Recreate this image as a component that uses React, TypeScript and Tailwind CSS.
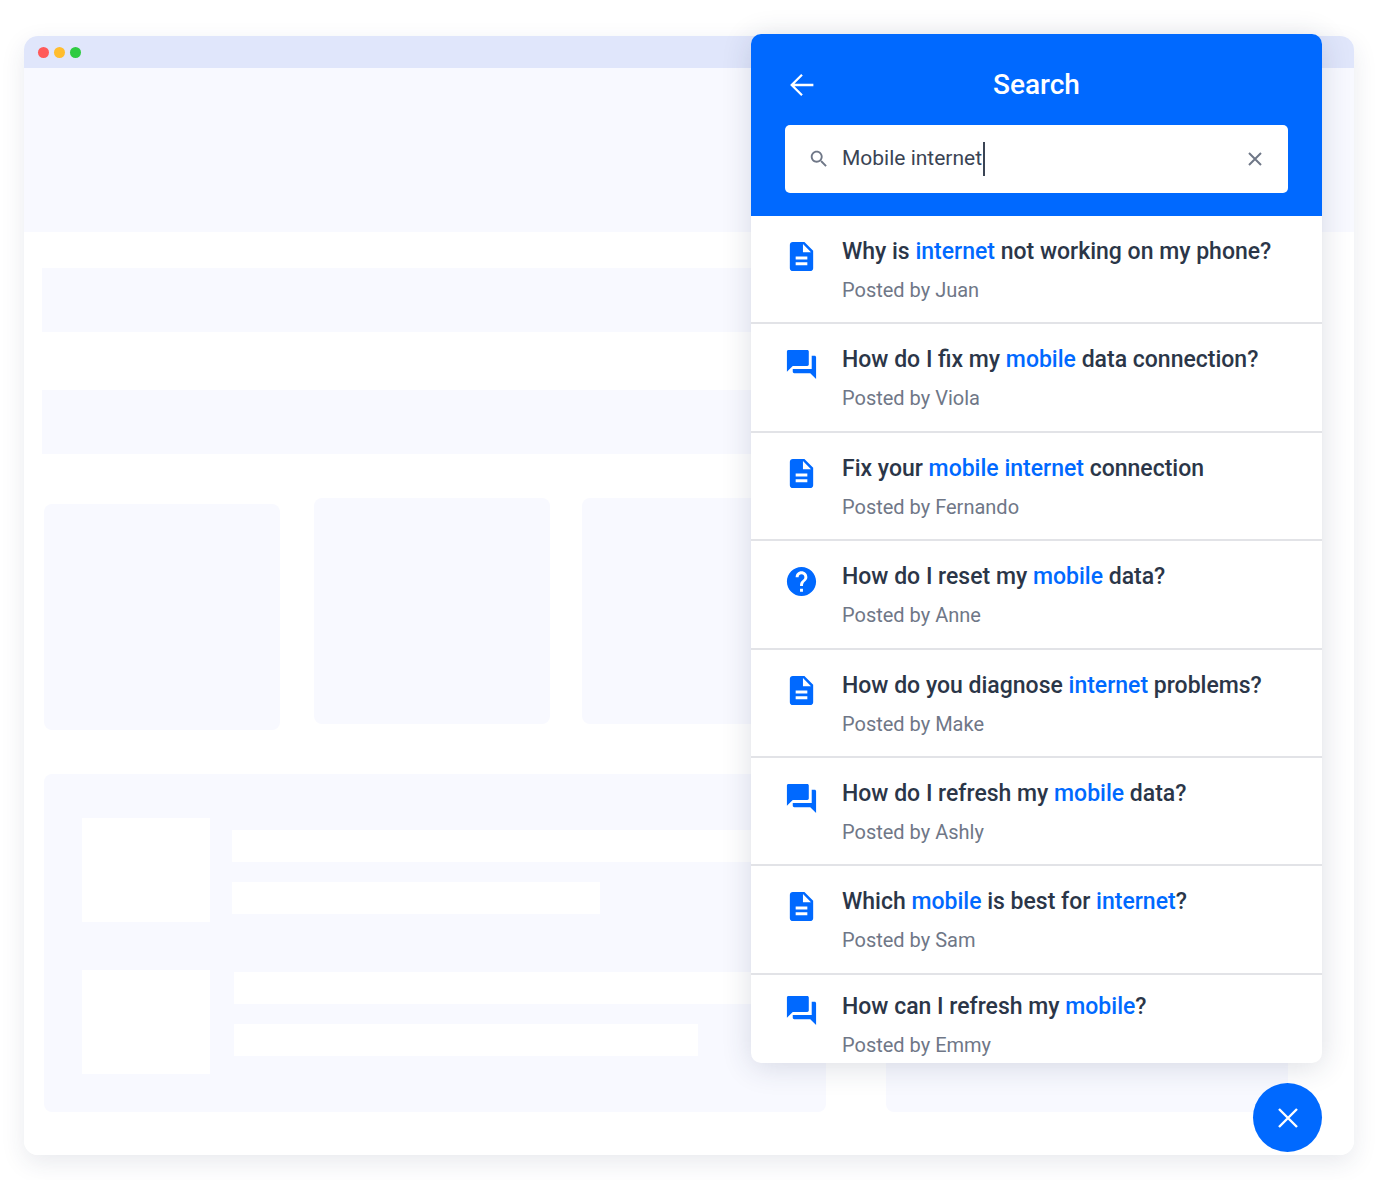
const docPath = 'M14 2H6c-1.1 0-1.99.9-1.99 2L4 20c0 1.1.89 2 1.99 2H18c1.1 0 2-.9 2-2V8l-6-6zm2 16H8v-2h8v2zm0-4H8v-2h8v2zm-3-5V3.5L18.5 9H13z'
const forumPath = 'M21 6h-2v9H6v2c0 .55.45 1 1 1h11l4 4V7c0-.55-.45-1-1-1zm-4 6V3c0-.55-.45-1-1-1H3c-.55 0-1 .45-1 1v14l4-4h10c.55 0 1-.45 1-1z'
const helpPath = 'M12 2C6.48 2 2 6.48 2 12s4.48 10 10 10 10-4.48 10-10S17.52 2 12 2zm1 17h-2v-2h2v2zm2.07-7.75l-.9.92C13.45 12.9 13 13.5 13 15h-2v-.5c0-1.1.45-2.1 1.17-2.83l1.24-1.26c.37-.36.59-.86.59-1.41 0-1.1-.9-2-2-2s-2 .9-2 2H8c0-2.21 1.79-4 4-4s4 1.79 4 4c0 .88-.36 1.68-.93 2.25z'

const results = [
  { icon: docPath, title: ['Why is ', '*internet', ' not working on my phone?'], by: 'Juan' },
  { icon: forumPath, title: ['How do I fix my ', '*mobile', ' data connection?'], by: 'Viola' },
  { icon: docPath, title: ['Fix your ', '*mobile internet', ' connection'], by: 'Fernando' },
  { icon: helpPath, title: ['How do I reset my ', '*mobile', ' data?'], by: 'Anne' },
  { icon: docPath, title: ['How do you diagnose ', '*internet', ' problems?'], by: 'Make' },
  { icon: forumPath, title: ['How do I refresh my ', '*mobile', ' data?'], by: 'Ashly' },
  { icon: docPath, title: ['Which ', '*mobile', ' is best for ', '*internet', '?'], by: 'Sam' },
]

function ResultIcon({ d }: { d: string }) {
  return (
    <svg viewBox="0 0 24 24" className="h-[35px] w-[35px] shrink-0 fill-[#0069ff]">
      <path d={d} />
    </svg>
  )
}

function Title({ parts }: { parts: string[] }) {
  return (
    <div className="text-[23px] leading-[30px] font-medium whitespace-nowrap text-[#2b3648]">
      {parts.map((p, i) =>
        p.startsWith('*') ? (
          <span key={i} className="text-[#0069ff]">{p.slice(1)}</span>
        ) : (
          <span key={i}>{p}</span>
        )
      )}
    </div>
  )
}

function Placeholder() {
  return (
    <div className="w-[1330px] h-[1119px] rounded-[14px] bg-white overflow-hidden">
      <div className="h-8 bg-[#e0e6fb] flex items-center pl-[14px] gap-[5px]">
        <span className="h-[11px] w-[11px] rounded-full bg-[#ff5a5a]" />
        <span className="h-[11px] w-[11px] rounded-full bg-[#ffbd2e]" />
        <span className="h-[11px] w-[11px] rounded-full bg-[#2ecb42]" />
      </div>
      <div className="h-[164px] bg-[#f8f9ff]" />

      <div className="pt-[36px] pl-[18px]">
        <div className="h-[64px] w-[800px] bg-[#f8f9ff]" />
        <div className="h-[64px] w-[800px] mt-[58px] bg-[#f8f9ff]" />
      </div>

      <div className="flex items-start mt-[44px] ml-5">
        <div className="h-[226px] w-[236px] mt-[6px] rounded-lg bg-[#f8f9ff]" />
        <div className="h-[226px] w-[236px] ml-[34px] rounded-lg bg-[#f8f9ff]" />
        <div className="h-[226px] w-[236px] ml-[32px] rounded-lg bg-[#f8f9ff]" />
      </div>

      <div className="flex mt-[44px] ml-5 gap-[60px]">
        <div className="h-[338px] w-[782px] rounded-lg bg-[#f8f9ff] pl-[38px] pt-[44px]">
          <div className="flex">
            <div className="h-[104px] w-[128px] bg-white" />
            <div className="ml-[22px] pt-3">
              <div className="h-8 w-[540px] bg-white" />
              <div className="h-8 w-[368px] mt-5 bg-white" />
            </div>
          </div>
          <div className="flex mt-[48px]">
            <div className="h-[104px] w-[128px] bg-white" />
            <div className="ml-6 pt-[2px]">
              <div className="h-8 w-[540px] bg-white" />
              <div className="h-8 w-[464px] mt-5 bg-white" />
            </div>
          </div>
        </div>
        <div className="h-[338px] w-[402px] rounded-lg bg-[#f8f9ff]" />
      </div>
    </div>
  )
}

export default function App() {
  return (
    <div className="relative w-[1380px] h-[1180px] bg-white overflow-hidden pt-[36px] pl-6 font-['Roboto',sans-serif]">
      <div className="rounded-[14px] w-[1330px] shadow-[0_8px_24px_rgba(40,50,90,0.10)]">
        <Placeholder />
      </div>

      {/* Search panel */}
      <div className="absolute left-[751px] top-[34px] w-[571px] h-[1029px] rounded-[10px] bg-white overflow-hidden shadow-[0_4px_30px_rgba(40,50,90,0.16)] flex flex-col">
        <div className="h-[182px] shrink-0 bg-[#0069ff] px-[34px] pt-[32px]">
          <div className="relative h-[38px] flex items-center justify-center">
            <svg viewBox="0 0 24 24" className="absolute left-[4px] top-[6px] h-[26px] w-[26px] fill-none stroke-white stroke-[2.1]">
              <path d="M22.5 12H2.5M12 2.5L2.5 12L12 21.5" />
            </svg>
            <span className="text-[28px] font-medium text-white">Search</span>
          </div>
          <div className="mt-[21px] h-[68px] rounded-[5px] bg-white flex items-center pl-[24px] pr-[26px]">
            <svg viewBox="0 0 24 24" className="h-[22px] w-[22px] fill-[#6f7787] shrink-0 -ml-[1px]">
              <path d="M15.5 14h-.79l-.28-.27C15.41 12.59 16 11.11 16 9.5 16 5.91 13.09 3 9.5 3S3 5.91 3 9.5 5.91 16 9.5 16c1.61 0 3.09-.59 4.23-1.57l.27.28v.79l5 4.99L20.49 19l-4.99-5zm-6 0C7.01 14 5 11.99 5 9.5S7.01 5 9.5 5 14 7.01 14 9.5 11.99 14 9.5 14z" />
            </svg>
            <span className="ml-[12px] text-[21px] text-[#3a4454] whitespace-nowrap">Mobile internet</span>
            <span className="ml-[1px] h-[34px] w-[2px] bg-[#3a4454]" />
            <svg viewBox="0 0 14 14" className="ml-auto h-[14px] w-[14px] fill-none stroke-[#6f7787] stroke-2">
              <path d="M1 1L13 13M13 1L1 13" />
            </svg>
          </div>
        </div>

        {results.map((r) => (
          <div key={r.by} className="h-[108.4px] shrink-0 border-b-2 border-[#e2e3e7] flex pl-[33px]">
            <div className="pt-[23px]">
              <ResultIcon d={r.icon} />
            </div>
            <div className="ml-[23px] pt-[21px]">
              <Title parts={r.title} />
              <div className="mt-[9px] text-[20px] leading-[28px] text-[#6f7787]">Posted by {r.by}</div>
            </div>
          </div>
        ))}

        <div className="flex pl-[33px]">
          <div className="pt-[18px]">
            <ResultIcon d={forumPath} />
          </div>
          <div className="ml-[23px] pt-[17px]">
            <Title parts={['How can I refresh my ', '*mobile', '?']} />
            <div className="mt-[9px] text-[20px] leading-[28px] text-[#6f7787]">Posted by Emmy</div>
          </div>
        </div>
      </div>

      <button className="absolute left-[1253px] top-[1083px] h-[69px] w-[69px] rounded-full bg-[#0069ff] flex items-center justify-center">
        <svg viewBox="0 0 20 20" className="h-5 w-5 fill-none stroke-white stroke-[2.4]">
          <path d="M1 1L19 19M19 1L1 19" />
        </svg>
      </button>
    </div>
  )
}
